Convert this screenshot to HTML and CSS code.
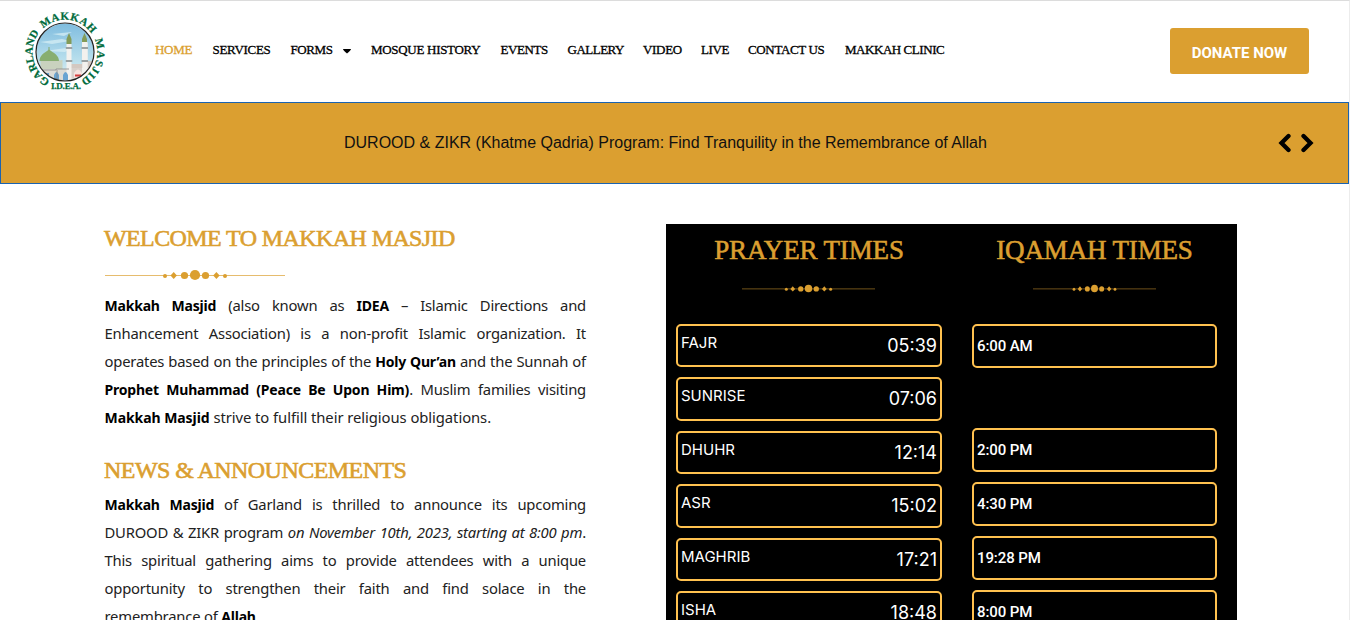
FILE: index.html
```html
<!DOCTYPE html>
<html lang="en">
<head>
<meta charset="utf-8">
<title>Makkah Masjid</title>
<link rel="stylesheet" href="styles.css">
</head>
<body>
<svg width="0" height="0" class="defs">
  <symbol id="ornament" viewBox="0 0 180 12" preserveAspectRatio="none">
    <path d="M0 6.500H180" stroke="#db9f30" stroke-opacity=".7"/>
    <g fill="#db9f30"><circle cx="60" cy="7" r="2"/><path d="M65.500 6.500l3.200-3.400 3.200 3.400-3.200 3.400z"/><circle cx="79.500" cy="6.500" r="3.600"/><circle cx="90" cy="6" r="5.100"/><circle cx="100.500" cy="6.500" r="3.600"/><path d="M108.200 6.500l3.200-3.400 3.200 3.400-3.200 3.400z"/><circle cx="120" cy="7" r="2"/></g>
  </symbol>
</svg>
<div class="page">
  <header class="header">
    <svg class="logo" viewBox="24 12 84 80">
      <defs>
        <clipPath id="disc"><circle cx="65" cy="52" r="28.500"/></clipPath>
        <linearGradient id="sky" x1="0" y1="0" x2="0" y2="1"><stop offset="0" stop-color="#7dbbde"/><stop offset=".6" stop-color="#b5ddec"/><stop offset="1" stop-color="#e5f1f0"/></linearGradient>
        <path id="arcLeft" d="M50 80.500A32 32 0 0 1 40.500 31"/>
        <path id="arcTop" d="M43.200 28.500A32 32 0 0 1 93.500 37"/>
        <path id="arcRight" d="M94.700 39.500A32 32 0 0 1 78.500 81.100"/>
      </defs>
      <g clip-path="url(#disc)">
        <path fill="url(#sky)" d="M35 22h60v60H35z"/>
        <path d="M40 42l22-3 8 2-18 3zM45 51l28-4-8 5zM52 34l20-2-8 4z" fill="#d5edf4" opacity=".75"/>
        <path d="M35 69h60v14H35z" fill="#dcdcd6"/>
        <path d="M52.500 61v-1h-12v9h22v-9z" fill="#c9d2be"/>
        <path d="M39.500 61c0-6 5-8 9.500-11.500 4.500 3.500 10 5.500 10 11.500z" fill="#88ae70"/>
        <path d="M49 50v-3" stroke="#83a86b"/>
        <path d="M84 62h10v16H68V66h16z" fill="#d8d0cb"/>
        <path d="M82.500 42h5v39h-5z" transform="translate(-.5)" fill="#f0efec"/>
        <path d="M98 60l-6-2v20h4zM87 61h7v7h-7zM87 68H68v-4h14v-3h5z" fill="#d3c8c1"/>
        <path d="M98 42h5v39h-5z" transform="translate(-15.500)" fill="#f4f2ef"/>
        <path d="M82 42h5v-3l-2.500-6-2.500 6z" fill="#839b58"/>
        <path d="M68 43h5v38h-5z" transform="translate(14.500)" fill="#f2f1ee"/>
        <g transform="translate(-16)">
          <path d="M82.500 44h5v37h-5z" fill="#f2f1ee"/>
          <path d="M82.500 44h5v-5l-2.500-6-2.500 6z" fill="#839b58"/>
          <path d="M81.800 47h6.500v2h-6.500zM81.800 60h6.500v2h-6.500z" fill="#9ba2a3"/>
        </g>
        <path d="M81.500 47h6.500v2h-6.500zM81.500 60h6.500v2h-6.500z" fill="#9ba2a3"/>
        <path d="M54 81v-6q2.500-6 5 0v6zM63 81v-6q2.500-6 5 0v6zM45 81v-8h4v8z" fill="#69a4d2"/>
        <path d="M74 81v-8q4-7 8 0v8z" fill="#f6e3df"/>
        <path d="M75 75.500h6" stroke="#d43c3c" stroke-width="2"/>
        <path d="M36 70h20v-1h13M57 70v12M68 81h18" stroke="#858786" fill="none" stroke-width=".8"/>
      </g>
      <circle cx="65" cy="52" r="29" fill="none" stroke="#222" stroke-width="1.200"/>
      <g class="logo-text">
        <text><textPath href="#arcLeft" textLength="56">GARLAND</textPath></text>
        <text><textPath href="#arcTop" textLength="55">MAKKAH</textPath></text>
        <text><textPath href="#arcRight" textLength="47">MASJID</textPath></text>
        <text class="logo-idea" x="51" y="88.800" textLength="30">I.D.E.A.</text>
      </g>
    </svg>
    <nav class="nav">
      <a class="n1 active">HOME</a><a class="n2">SERVICES</a><a class="n3">FORMS <svg width="8" height="5" viewBox="0 0 8 5"><path d="M0 0H8Q8 1 4 4.500Q0 1 0 0Z"/></svg></a><a class="n4">MOSQUE HISTORY</a><a class="n5">EVENTS</a><a class="n6">GALLERY</a><a class="n7">VIDEO</a><a class="n8">LIVE</a><a class="n9">CONTACT US</a><a class="n10">MAKKAH CLINIC</a>
    </nav>
    <a class="donate">DONATE NOW</a>
  </header>
  <section class="banner">
    <span class="banner-text">DUROOD &amp; ZIKR (Khatme Qadria) Program: Find Tranquility in the Remembrance of Allah</span>
    <svg class="arrows" width="36" height="20" viewBox="0 0 36 20"><path d="M10.500 3L3.500 10l7 7M25.500 3l7 7-7 7" fill="none" stroke="#000" stroke-width="4.300" stroke-linecap="round"/></svg>
  </section>
  <main class="main">
    <div class="about">
      <h2 class="title welcome">WELCOME TO MAKKAH MASJID</h2>
      <svg class="divider"><use href="#ornament"/></svg>
      <p class="copy">
        <span><b>Makkah Masjid</b> (also known as <b>IDEA</b> – Islamic Directions and</span>
        <span>Enhancement Association) is a non-profit Islamic organization. It</span>
        <span>operates based on the principles of the <b>Holy Qur’an</b> and the Sunnah of</span>
        <span><b>Prophet Muhammad (Peace Be Upon Him)</b>. Muslim families visiting</span>
        <span class="last wide"><b>Makkah Masjid</b> strive to fulfill their religious obligations.</span>
      </p>
      <h2 class="title news">NEWS &amp; ANNOUNCEMENTS</h2>
      <p class="copy">
        <span><b>Makkah Masjid</b> of Garland is thrilled to announce its upcoming</span>
        <span>DUROOD &amp; ZIKR program <i>on November 10th, 2023, starting at 8:00 pm</i>.</span>
        <span>This spiritual gathering aims to provide attendees with a unique</span>
        <span>opportunity to strengthen their faith and find solace in the</span>
        <span class="last">remembrance of <b>Allah</b>.</span>
      </p>
    </div>
    <div class="times">
      <div class="prayer">
        <h2 class="title big">PRAYER TIMES</h2>
        <svg class="divider d1" viewBox="0 0 133 9" preserveAspectRatio="none"><use href="#ornament" width="133" height="9"/></svg>
        <div class="rows">
          <div class="row"><span>FAJR</span><time>05:39</time></div>
          <div class="row"><span>SUNRISE</span><time>07:06</time></div>
          <div class="row"><span>DHUHR</span><time>12:14</time></div>
          <div class="row"><span>ASR</span><time>15:02</time></div>
          <div class="row"><span>MAGHRIB</span><time>17:21</time></div>
          <div class="row"><span>ISHA</span><time>18:48</time></div>
        </div>
      </div>
      <div class="iqamah">
        <h2 class="title big">IQAMAH TIMES</h2>
        <svg class="divider d2" viewBox="0 0 123 9" preserveAspectRatio="none"><use href="#ornament" width="123" height="9"/></svg>
        <div class="rows">
          <div class="slot first">6:00 AM</div>
          <div class="slot">2:00 PM</div>
          <div class="slot">4:30 PM</div>
          <div class="slot">19:28 PM</div>
          <div class="slot">8:00 PM</div>
        </div>
      </div>
    </div>
  </main>
</div>
</body>
</html>
```
FILE: styles.css
```css
* { box-sizing: border-box; }
body { margin: 0; background: #fff; overflow: hidden; }
.defs { position: absolute; }
.page { width: 1350px; height: 620px; overflow: hidden; border-top: 1px solid #dcdcdc; border-right: 1px solid #ececec; }
.header { height: 101px; display: flex; align-items: flex-start; padding: 11px 40px 0 24px; }
.logo { width: 84px; height: 80px; flex: none; overflow: visible; }
.logo-text { font: bold 11px "Liberation Serif", serif; fill: #006b3c; stroke: #006b3c; stroke-width: .25px; }
.logo-idea { font-size: 9px; }
.nav { display: flex; gap: 20px; margin: 29px 0 0 47px; font: 13px/18px "Liberation Serif", serif; color: #000; -webkit-text-stroke: .3px currentColor; white-space: nowrap; }
.nav a { flex: none; }
.nav svg { margin-left: 8px; }
.nav .active { color: #db9f30; }
.n1 { width: 37.5px; letter-spacing: -.3px; }
.n2 { width: 58px; letter-spacing: -.3px; }
.n3 { width: 60.5px; letter-spacing: -.4px; }
.n4 { width: 109.5px; letter-spacing: -.3px; }
.n5 { width: 47px; letter-spacing: -.4px; }
.n6 { width: 55.5px; letter-spacing: -.5px; }
.n7 { width: 38px; letter-spacing: -.3px; }
.n8 { width: 27px; letter-spacing: -.4px; }
.n9 { width: 77px; letter-spacing: -.35px; }
.n10 { width: 99px; letter-spacing: -.45px; }
.donate { margin: 16px 0 0 auto; width: 139px; height: 46px; border-radius: 3px; background: #db9f30; color: #fff; font: bold 15px/50px Roboto, sans-serif; text-align: center; }
.banner { height: 82px; background: #db9f30; border: 1px solid #1a63b0; display: flex; align-items: center; padding: 0 34px 0 343px; justify-content: space-between; }
.banner-text { font: 16px/20px "Liberation Sans", sans-serif; color: #111; white-space: nowrap; }
.main { display: flex; padding: 40px 0 0 104px; align-items: flex-start; }
.about { width: 482px; }
.title { margin: 0; font: 24px/28px "Liberation Serif", serif; height: 30px; color: #db9f30; -webkit-text-stroke: .6px #db9f30; white-space: nowrap; }
.welcome { letter-spacing: -.6px; }
.divider { display: block; width: 180px; height: 12px; margin: 15px 0 0 1px; }
.copy { margin: 10px 0 0; padding-left: .5px; font: 14.8px/28px "Noto Sans", sans-serif; color: #222; letter-spacing: -.2px; }
.copy span { display: block; height: 28px; text-align: justify; text-align-last: justify; white-space: nowrap; }
.copy .last { text-align-last: left; }
.copy .wide { letter-spacing: -.06px; }
.copy b { color: #000; font-size: 14px; line-height: 20px; }
.news { margin-top: 24px; letter-spacing: -.55px; line-height: 30px; }
.news + .copy { margin-top: 5px; }
.times { margin-left: 80px; width: 571px; height: 420px; background: #000; display: flex; gap: 30px; padding: 10px; }
.prayer { width: 266px; }
.iqamah { width: 245px; }
.big { font-size: 27px; line-height: 32px; height: 34px; text-align: center; letter-spacing: -.15px; }
.divider.d1 { width: 133px; height: 9px; margin: 16px 0 0 66px; }
.divider.d2 { width: 123px; height: 9px; margin: 16px auto 0; }
.rows { margin-top: 31px; display: flex; flex-direction: column; gap: 10px; }
.prayer .rows { margin-top: 30.75px; }
.row, .slot { border: 2px solid #ffc14f; border-radius: 5px; color: #fff; flex: none; }
.row { height: 43.5px; display: flex; justify-content: space-between; padding: 0 3px; }
.row span { font: 15px/34px Inter, sans-serif; }
.row time { font: 18px/40px Inter, sans-serif; }
.slot { height: 44px; padding-left: 3px; font: 500 15px/40px Roboto, sans-serif; letter-spacing: -.1px; }
.slot.first { margin-bottom: 50px; }
```
